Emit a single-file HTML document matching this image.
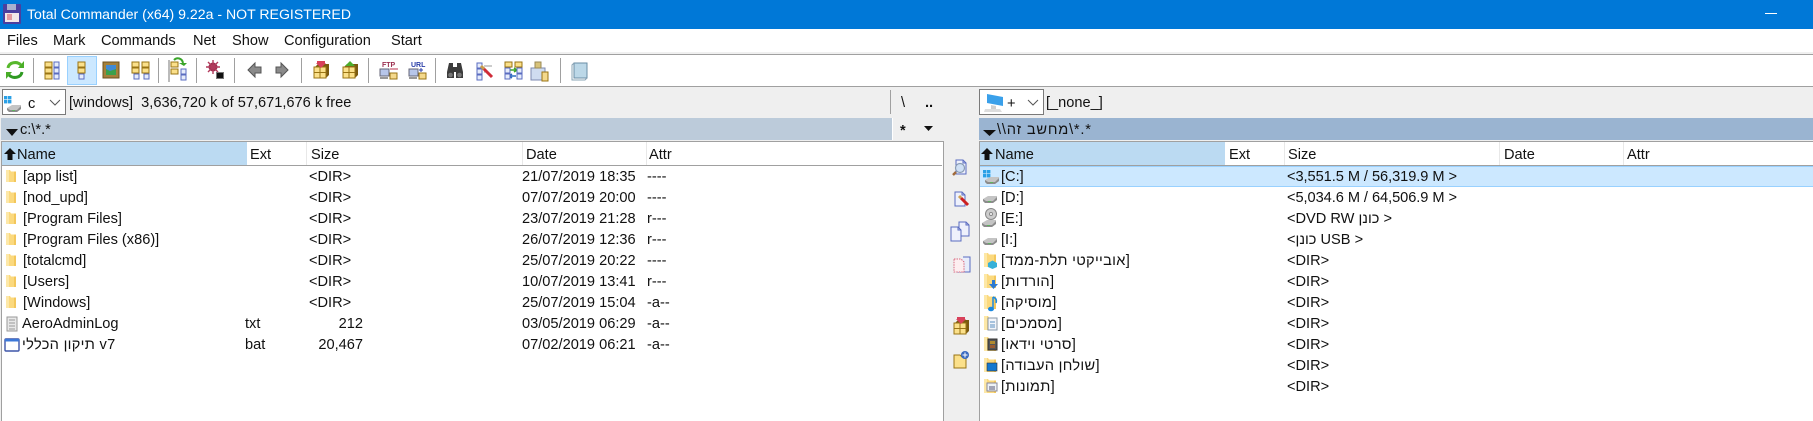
<!DOCTYPE html>
<html><head><meta charset="utf-8"><title>Total Commander</title>
<style>
html,body{margin:0;padding:0;background:#fff}
#r{position:relative;width:1813px;height:421px;overflow:hidden;background:#fff;font-family:"Liberation Sans","Noto Sans CJK SC",sans-serif;font-size:14.6px;color:#111}
.b{position:absolute}
.t{position:absolute;white-space:pre;line-height:20px;height:20px}
.h{letter-spacing:.3px}
.r{text-align:right}
svg{position:absolute;left:0;top:0}
</style></head><body><div id="r">
<div class="b" style="left:0;top:0;width:1813px;height:29px;background:#0078d7"></div>
<div class="t" style="left:27px;top:4px;color:#fff;font-size:14.1px;">Total Commander (x64) 9.22a - NOT REGISTERED</div>
<div class="b" style="left:1765px;top:13px;width:12px;height:1px;background:#fff"></div>

<div class="t" style="left:7px;top:31px">Files</div>
<div class="t" style="left:53px;top:31px">Mark</div>
<div class="t" style="left:101px;top:31px">Commands</div>
<div class="t" style="left:193px;top:31px">Net</div>
<div class="t" style="left:232px;top:31px">Show</div>
<div class="t" style="left:284px;top:31px">Configuration</div>
<div class="t" style="left:391px;top:31px">Start</div>

<div class="b" style="left:0;top:52px;width:1813px;height:2px;background:#f0f0f0"></div>
<div class="b" style="left:0;top:54px;width:1813px;height:1px;background:#a0a0a0"></div>
<div class="b" style="left:67px;top:56px;width:28px;height:27px;background:#cce8ff;border:1px solid #99d1ff"></div>
<div class="b" style="left:0;top:86px;width:1813px;height:1px;background:#a0a0a0"></div>
<div class="b" style="left:0;top:87px;width:1813px;height:334px;background:#efefef"></div>

<div class="b" style="left:33px;top:58px;width:1px;height:25px;background:#a0a0a0"></div>
<div class="b" style="left:158px;top:58px;width:1px;height:25px;background:#a0a0a0"></div>
<div class="b" style="left:196px;top:58px;width:1px;height:25px;background:#a0a0a0"></div>
<div class="b" style="left:234px;top:58px;width:1px;height:25px;background:#a0a0a0"></div>
<div class="b" style="left:301px;top:58px;width:1px;height:25px;background:#a0a0a0"></div>
<div class="b" style="left:368px;top:58px;width:1px;height:25px;background:#a0a0a0"></div>
<div class="b" style="left:435px;top:58px;width:1px;height:25px;background:#a0a0a0"></div>
<div class="b" style="left:560px;top:58px;width:1px;height:25px;background:#a0a0a0"></div>

<!-- drive row -->
<div class="b" style="left:2px;top:89px;width:62px;height:24px;background:#fff;border:1px solid #7a7a7a"></div>
<div class="t" style="left:28px;top:94px">c</div>
<div class="t" style="left:69px;top:93px">[windows]  3,636,720 k of 57,671,676 k free</div>
<div class="b" style="left:890px;top:90px;width:1px;height:24px;background:#a0a0a0"></div>
<div class="t" style="left:901px;top:93px">\</div>
<div class="t" style="left:925px;top:93px;font-weight:bold">..</div>
<div class="t" style="left:900px;top:121px;font-weight:bold">*</div>

<div class="b" style="left:979px;top:89px;width:63px;height:24px;background:#fff;border:1px solid #7a7a7a"></div>
<div class="t" style="left:1007px;top:94px">+</div>
<div class="t" style="left:1046px;top:93px">[_none_]</div>

<!-- path bars -->
<div class="b" style="left:1px;top:118px;width:891px;height:22px;background:#bccbda"></div>
<div class="b" style="left:892px;top:118px;width:1px;height:22px;background:#fff"></div>
<div class="t" style="left:20px;top:120px">c:\*.*</div>
<div class="b" style="left:979px;top:118px;width:834px;height:22px;background:#9ab4d1"></div>
<div class="t" style="left:997px;top:120px;letter-spacing:.8px">\\מחשב זה\*.*</div>

<!-- left panel -->
<div class="b" style="left:1px;top:141px;width:941px;height:280px;background:#fff;border-left:1px solid #a0a0a0;border-right:1px solid #a0a0a0;border-top:1px solid #a0a0a0"></div>
<div class="b" style="left:2px;top:142px;width:245px;height:23px;background:#bbdaf2"></div>
<div class="b" style="left:2px;top:165px;width:940px;height:1px;background:#a0a0a0"></div>
<div class="b" style="left:306px;top:142px;width:1px;height:23px;background:#e8e8e8"></div>
<div class="b" style="left:522px;top:142px;width:1px;height:23px;background:#e8e8e8"></div>
<div class="b" style="left:646px;top:142px;width:1px;height:23px;background:#e8e8e8"></div>
<div class="t" style="left:17px;top:145px">Name</div>
<div class="t" style="left:250px;top:145px">Ext</div>
<div class="t" style="left:311px;top:145px">Size</div>
<div class="t" style="left:526px;top:145px">Date</div>
<div class="t" style="left:649px;top:145px">Attr</div>

<div class="t" style="left:23px;top:167px">[app list]</div><div class="t" style="left:309px;top:167px">&lt;DIR&gt;</div><div class="t" style="left:522px;top:167px">21/07/2019 18:35</div><div class="t" style="left:647px;top:167px">----</div>
<div class="t" style="left:23px;top:188px">[nod_upd]</div><div class="t" style="left:309px;top:188px">&lt;DIR&gt;</div><div class="t" style="left:522px;top:188px">07/07/2019 20:00</div><div class="t" style="left:647px;top:188px">----</div>
<div class="t" style="left:23px;top:209px">[Program Files]</div><div class="t" style="left:309px;top:209px">&lt;DIR&gt;</div><div class="t" style="left:522px;top:209px">23/07/2019 21:28</div><div class="t" style="left:647px;top:209px">r---</div>
<div class="t" style="left:23px;top:230px">[Program Files (x86)]</div><div class="t" style="left:309px;top:230px">&lt;DIR&gt;</div><div class="t" style="left:522px;top:230px">26/07/2019 12:36</div><div class="t" style="left:647px;top:230px">r---</div>
<div class="t" style="left:23px;top:251px">[totalcmd]</div><div class="t" style="left:309px;top:251px">&lt;DIR&gt;</div><div class="t" style="left:522px;top:251px">25/07/2019 20:22</div><div class="t" style="left:647px;top:251px">----</div>
<div class="t" style="left:23px;top:272px">[Users]</div><div class="t" style="left:309px;top:272px">&lt;DIR&gt;</div><div class="t" style="left:522px;top:272px">10/07/2019 13:41</div><div class="t" style="left:647px;top:272px">r---</div>
<div class="t" style="left:23px;top:293px">[Windows]</div><div class="t" style="left:309px;top:293px">&lt;DIR&gt;</div><div class="t" style="left:522px;top:293px">25/07/2019 15:04</div><div class="t" style="left:647px;top:293px">-a--</div>
<div class="t" style="left:22px;top:314px">AeroAdminLog</div><div class="t" style="left:245px;top:314px">txt</div><div class="t r" style="left:303px;width:60px;top:314px">212</div><div class="t" style="left:522px;top:314px">03/05/2019 06:29</div><div class="t" style="left:647px;top:314px">-a--</div>
<div class="t h" style="left:22px;top:335px">תיקון הכללי v7</div><div class="t" style="left:245px;top:335px">bat</div><div class="t r" style="left:303px;width:60px;top:335px">20,467</div><div class="t" style="left:522px;top:335px">07/02/2019 06:21</div><div class="t" style="left:647px;top:335px">-a--</div>

<!-- right panel -->
<div class="b" style="left:979px;top:141px;width:834px;height:280px;background:#fff;border-left:1px solid #a0a0a0;border-top:1px solid #a0a0a0"></div>
<div class="b" style="left:980px;top:142px;width:245px;height:23px;background:#bbdaf2"></div>
<div class="b" style="left:980px;top:165px;width:833px;height:1px;background:#a0a0a0"></div>
<div class="b" style="left:1284px;top:142px;width:1px;height:23px;background:#e8e8e8"></div>
<div class="b" style="left:1499px;top:142px;width:1px;height:23px;background:#e8e8e8"></div>
<div class="b" style="left:1623px;top:142px;width:1px;height:23px;background:#e8e8e8"></div>
<div class="t" style="left:995px;top:145px">Name</div>
<div class="t" style="left:1229px;top:145px">Ext</div>
<div class="t" style="left:1288px;top:145px">Size</div>
<div class="t" style="left:1504px;top:145px">Date</div>
<div class="t" style="left:1627px;top:145px">Attr</div>
<div class="b" style="left:980px;top:166px;width:833px;height:19px;background:#cce8ff;border-top:1px solid #99d1ff;border-bottom:1px solid #99d1ff"></div>

<div class="t" style="left:1001px;top:167px">[C:]</div><div class="t" style="left:1287px;top:167px;letter-spacing:-.05px">&lt;3,551.5 M / 56,319.9 M &gt;</div>
<div class="t" style="left:1001px;top:188px">[D:]</div><div class="t" style="left:1287px;top:188px;letter-spacing:-.05px">&lt;5,034.6 M / 64,506.9 M &gt;</div>
<div class="t" style="left:1001px;top:209px">[E:]</div><div class="t" style="left:1287px;top:209px">&lt;DVD RW כונן &gt;</div>
<div class="t" style="left:1001px;top:230px">[I:]</div><div class="t" style="left:1287px;top:230px">&lt;כונן USB &gt;</div>
<div class="t h" style="left:1001px;top:251px">[אובייקטי תלת-ממד]</div><div class="t" style="left:1287px;top:251px">&lt;DIR&gt;</div>
<div class="t h" style="left:1001px;top:272px">[הורדות]</div><div class="t" style="left:1287px;top:272px">&lt;DIR&gt;</div>
<div class="t h" style="left:1001px;top:293px">[מוסיקה]</div><div class="t" style="left:1287px;top:293px">&lt;DIR&gt;</div>
<div class="t h" style="left:1001px;top:314px">[מסמכים]</div><div class="t" style="left:1287px;top:314px">&lt;DIR&gt;</div>
<div class="t h" style="left:1001px;top:335px">[סרטי וידאו]</div><div class="t" style="left:1287px;top:335px">&lt;DIR&gt;</div>
<div class="t h" style="left:1001px;top:356px">[שולחן העבודה]</div><div class="t" style="left:1287px;top:356px">&lt;DIR&gt;</div>
<div class="t h" style="left:1001px;top:377px">[תמונות]</div><div class="t" style="left:1287px;top:377px">&lt;DIR&gt;</div>

<svg width="1813" height="421" viewBox="0 0 1813 421">
<defs>
<g id="y"><rect x="0" y="0" width="7" height="5" fill="#fbe08a" stroke="#9a7414"/></g>
<g id="f"><rect x="0" y="0" width="5" height="5" fill="#e6ecfb" stroke="#5a6cc0"/></g>
<g id="fold"><path d="M-5-7H-1L0-5.500H5V5H-5Z" fill="#fbd97e"/><path d="M-5-7H-2V5H-5Z" fill="#fde8a8"/><path d="M3-5.500H5V5H3Z" fill="#f3c75c"/></g>
<g id="foldb"><path d="M-5-7H-1L0-5.500H7V7H-5Z" fill="#fbd97e"/><path d="M-5-7H-2V7H-5Z" fill="#fde8a8"/><path d="M5-5.500H7V7H5Z" fill="#f3c75c"/></g>
<g id="hdd"><path d="M-7 1L-2-2H7V2L3 5H-5L-7 3Z" fill="#c4c4c4"/><path d="M-7 1L-4 3H3L7-1V2L3 5H-5L-7 3Z" fill="#8c8c8c"/><rect x="-2" y="3" width="3" height="1" fill="#5fb35f"/></g>
<g id="win"><rect x="0" y="0" width="3.400" height="3.400" fill="#29a0e6"/><rect x="4" y="0" width="3.400" height="3.400" fill="#29a0e6"/><rect x="0" y="4" width="3.400" height="3.400" fill="#29a0e6"/><rect x="4" y="4" width="3.400" height="3.400" fill="#29a0e6"/></g>
<g id="box"><path d="M-6-4L-3-7H8V4L5 7H-6Z" fill="#7a5a10"/><rect x="-7" y="-4" width="12" height="11" fill="#fbe08a" stroke="#9a7414"/><path d="M-7 1.500H5M-1-4V7" stroke="#9a7414" fill="none"/></g>
<g id="page"><path d="M-5-7H2L5-4V7H-5Z" fill="#eef1fc" stroke="#5a6cc0"/><path d="M2-7V-4H5" fill="none" stroke="#5a6cc0"/></g>
</defs>

<!-- title bar icon -->
<rect x="3" y="4" width="18" height="20" rx="1" fill="#4b3f9e"/><rect x="7" y="4" width="9" height="6" fill="#aab0cf"/><rect x="5" y="13" width="14" height="9" fill="#f3e8e8"/><path d="M7 15H12M7 17H12M7 19H12" stroke="#d24a5a"/>

<!-- toolbar -->
<g fill="none" stroke-width="3"><path d="M8 68C9 62 17 61 21 65" stroke="#57b82c"/><path d="M22 72C21 78 13 79 9 75" stroke="#2f9a22"/></g>
<path d="M18 68H24V61Z M12 72H6V79Z" fill="#4aae28"/>

<use href="#y" x="45" y="62"/><use href="#y" x="45" y="68"/><use href="#y" x="45" y="74"/>
<use href="#f" x="54" y="62"/><use href="#f" x="54" y="68"/><use href="#f" x="54" y="74"/>
<use href="#y" x="78" y="62"/><use href="#y" x="78" y="68"/><use href="#f" x="79" y="74"/>
<rect x="103" y="62" width="16" height="16" fill="#a4803a" stroke="#6b5120"/><rect x="106" y="65" width="10" height="10" fill="#3aa04c"/><path d="M106 65H116V69L110 71L106 69Z" fill="#3f8ad6"/>
<use href="#y" x="132" y="62"/><use href="#y" x="142" y="62"/><use href="#y" x="142" y="68"/><use href="#y" x="132" y="68"/><use href="#f" x="134" y="74"/><use href="#f" x="144" y="74"/>

<use href="#y" x="171" y="62"/><use href="#y" x="171" y="69"/><use href="#f" x="181" y="69"/><use href="#f" x="181" y="75"/><path d="M174 60C177 57 182 58 183 63" fill="none" stroke="#3aa52a" stroke-width="2"/><path d="M179 63H187L184 66Z" fill="#3aa52a"/><path d="M169 60V82" stroke="#777"/>

<circle cx="213" cy="67" r="4.500" fill="#9c3050"/><path d="M213 60V74M206 67H220M208 62L218 72M218 62L208 72" stroke="#b23a5c" stroke-width="1.400"/>
<rect x="217" y="73" width="6" height="5" fill="#111"/><rect x="216.500" y="72.500" width="7" height="6" fill="none" stroke="#777"/>

<path d="M248 70L255 63V67H261V73H255V77Z" fill="#8a8a8a" stroke="#555"/>
<path d="M288 70L281 63V67H276V73H281V77Z" fill="#8a8a8a" stroke="#555"/>

<use href="#box" x="321" y="71"/><path d="M316 63H326L321 68Z" fill="#d8405a"/><path d="M317 61H325V63H317Z" fill="#d8405a"/>
<use href="#box" x="350" y="71"/><path d="M345 66H355L350 61Z" fill="#4cae2c"/>

<text x="382" y="67" font-family="Liberation Sans" font-size="7" font-weight="bold" fill="#9c3050">FTP</text>
<rect x="380" y="69" width="9" height="7" fill="#b7c6ea" stroke="#667"/><rect x="380" y="77" width="8" height="2" fill="#999"/><path d="M390 69H398" stroke="#b8324d"/><rect x="390" y="73" width="7" height="6" fill="#f4d98c" stroke="#9a7414"/>
<text x="411" y="67" font-family="Liberation Sans" font-size="7" font-weight="bold" fill="#2a3ea8">URL</text>
<rect x="409" y="69" width="9" height="7" fill="#b7c6ea" stroke="#667"/><rect x="409" y="77" width="8" height="2" fill="#999"/><path d="M421 68V72M419 70H423" stroke="#2a3ea8"/><rect x="419" y="73" width="7" height="6" fill="#f4d98c" stroke="#9a7414"/>

<path d="M449 63H453V67H457V63H461L463 72V78H456V72H454V78H447V72Z" fill="#3c3c3c"/><circle cx="450.500" cy="75" r="2.300" fill="#777"/><circle cx="459.500" cy="75" r="2.300" fill="#777"/>

<use href="#f" x="477" y="63"/><use href="#f" x="477" y="69"/><use href="#f" x="477" y="75"/><path d="M484 66H492M484 72H487" stroke="#999"/><path d="M483 68L492 77" stroke="#cf2b38" stroke-width="3"/><path d="M481 66L484 69" stroke="#c79a4a" stroke-width="3"/>

<use href="#y" x="505" y="62"/><use href="#y" x="515" y="62"/><path d="M510 70H516M514 68L517 70L514 72" stroke="#3aa52a" fill="none" stroke-width="1.500"/><path d="M510 76H516M512 74L509 76L512 78" stroke="#2a6ac0" fill="none" stroke-width="1.500"/><use href="#f" x="505" y="68"/><use href="#f" x="505" y="74"/><use href="#f" x="517" y="68"/><use href="#f" x="517" y="74"/>

<rect x="531" y="68" width="14" height="12" fill="#cfdcf0" stroke="#7c8ab0"/><rect x="535" y="62" width="6" height="6" fill="#d8c37a" stroke="#9a8a55"/><rect x="542" y="72" width="6" height="9" fill="#f4d98c" stroke="#9a7414"/>

<path d="M574 63H587V78H574Z" fill="#bcd8e8" stroke="#6a8ea6"/><path d="M574 63L572 65V80H585L587 78" fill="none" stroke="#8aa4b6"/>

<!-- drive row -->
<use href="#win" x="4" y="96"/><use href="#hdd" x="14" y="107"/>
<path d="M50 100L55 105L60 100" fill="none" stroke="#555"/>
<path d="M987 94L1003 97V106L987 103Z" fill="#3aa0ea"/><path d="M985 109H1000L1002 112H984Z" fill="#ddd"/><path d="M991 105V109H996V106" fill="#cfcfcf"/>
<path d="M1028 100L1033 105L1038 100" fill="none" stroke="#555"/>

<!-- path triangles -->
<path d="M924 126H933L928.500 131Z" fill="#111"/>
<path d="M6 129H18L12 136Z" fill="#111"/>
<path d="M983 130H996L989.500 136Z" fill="#111"/>

<!-- up arrows in headers -->
<path d="M10 148L16 154H12.500V160H7.500V154H4Z" fill="#111"/>
<path d="M987 148L993 154H989.500V160H984.500V154H981Z" fill="#111"/>

<!-- left folders -->
<use href="#fold" x="11" y="177"/><use href="#fold" x="11" y="198"/><use href="#fold" x="11" y="219"/><use href="#fold" x="11" y="240"/><use href="#fold" x="11" y="261"/><use href="#fold" x="11" y="282"/><use href="#fold" x="11" y="303"/>
<rect x="7" y="317" width="10" height="14" fill="#e8e8e8" stroke="#999"/><path d="M9 320H15M9 323H15M9 326H15M9 329H15" stroke="#999"/>
<rect x="5" y="339" width="14" height="12" rx="1" fill="#fff" stroke="#3d55a8" stroke-width="1.400"/><rect x="5" y="339" width="14" height="2.500" fill="#3d78d8"/>

<!-- right icons -->
<use href="#win" x="983" y="170"/><use href="#hdd" x="992" y="179"/>
<use href="#hdd" x="990" y="198"/>
<circle cx="991" cy="214" r="5.500" fill="#ccc" stroke="#888"/><circle cx="991" cy="214" r="1.500" fill="#fff" stroke="#888"/><use href="#hdd" x="989" y="222"/>
<use href="#hdd" x="990" y="240"/>
<use href="#foldb" x="989" y="260"/><path d="M988 263L992.500 260.500L997 263V267L992.500 269L988 267Z" fill="#36b0d8"/>
<use href="#foldb" x="989" y="281"/><path d="M989 284H992V280H995V284H998L993.500 289Z" fill="#2d7ad0"/>
<use href="#foldb" x="989" y="302"/><path d="M993 297V308" stroke="#1a88e0" stroke-width="1.500"/><ellipse cx="991" cy="309" rx="3" ry="2.300" fill="#1a88e0"/><path d="M993 297C996 298 997 300 996 303" fill="none" stroke="#1a88e0" stroke-width="1.500"/>
<use href="#foldb" x="989" y="323"/><rect x="988" y="318" width="9" height="12" fill="#f2f5fa" stroke="#8a98a8"/><path d="M990 322H995M990 325H995M990 327H995" stroke="#5a90c0"/>
<use href="#foldb" x="989" y="344"/><rect x="988" y="339" width="9" height="11" fill="#555" stroke="#333"/><rect x="990" y="341" width="5" height="3" fill="#b08a30"/><rect x="990" y="345" width="5" height="3" fill="#9a5a30"/>
<use href="#foldb" x="989" y="365"/><rect x="987" y="363" width="10" height="8" fill="#1478d0" stroke="#333" stroke-width=".6"/>
<use href="#foldb" x="989" y="386"/><rect x="987" y="383" width="10" height="8" fill="#eef2f6" stroke="#889"/><path d="M989 387H995M989 389H995" stroke="#557"/>

<!-- middle buttons -->
<use href="#page" x="961" y="167"/><circle cx="960" cy="168" r="4.500" fill="#cfe0f5" stroke="#8a9cb4" stroke-width="1.200"/><path d="M956 172L953 175" stroke="#a06a3a" stroke-width="2.500"/>
<use href="#page" x="960" y="199"/><path d="M961 198L968 205" stroke="#cc2020" stroke-width="3"/><path d="M959 196L961 198" stroke="#d0a050" stroke-width="3"/>
<use href="#page" x="964" y="229"/><use href="#page" x="956" y="234"/>
<path d="M963 257H970V272H957" fill="#e8edfb" stroke="#5a6cc0"/><path d="M954 259H961L964 262V272H954Z" fill="#fdeef0" stroke="#d86a80" stroke-dasharray="1.500 1"/>
<use href="#box" x="961" y="327"/><path d="M956 319H966L961 324Z" fill="#d8405a"/><path d="M957 317H965V319H957Z" fill="#d8405a"/>
<path d="M954 355H960L962 357H966V368H954Z" fill="#fbe08a" stroke="#9a7414"/><circle cx="965" cy="355" r="4" fill="#3a6ac0"/><path d="M965 352.500V357.500M962.500 355H967.500" stroke="#fff"/>
</svg>
</div></body></html>
